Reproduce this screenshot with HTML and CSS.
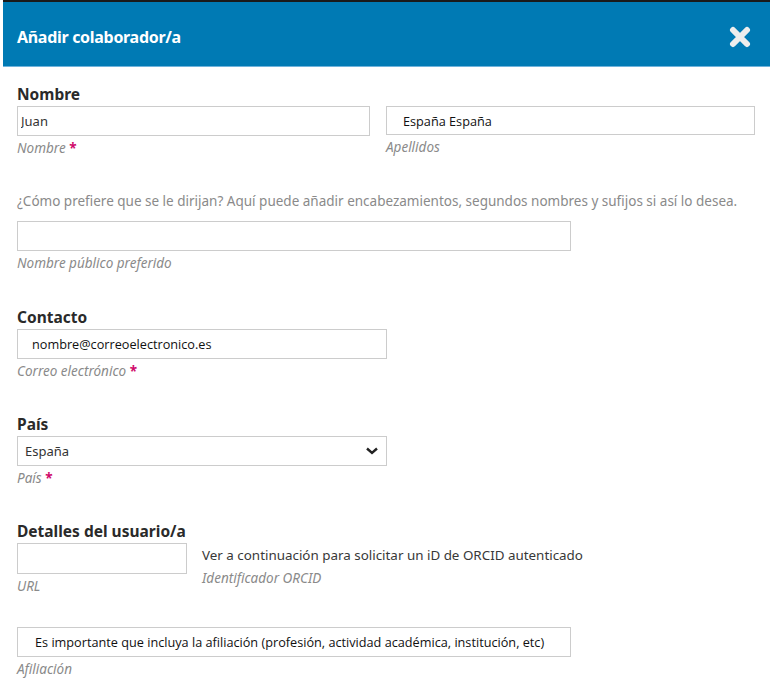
FILE: index.html
```html
<!DOCTYPE html>
<html lang="es">
<head>
<meta charset="utf-8">
<title>Añadir colaborador/a</title>
<link rel="stylesheet" href="styles.css">
</head>
<body>
<div class="modal">
  <div class="modal-header">
    <h1 class="modal-title">Añadir colaborador/a</h1>
    <svg class="close" width="22" height="22" viewBox="0 0 22 22" aria-label="Cerrar">
      <path d="M4 4 L18 18 M18 4 L4 18" stroke="#ededed" stroke-width="6" stroke-linecap="round" fill="none"/>
    </svg>
  </div>
  <div class="modal-body">
    <section class="section first">
      <div class="label">Nombre</div>
      <div class="row">
        <div class="col">
          <input class="input w-given pad-given" type="text" value="Juan" readonly>
          <div class="caption">Nombre <span class="req">*</span></div>
        </div>
        <div class="col">
          <input class="input w-family pad-family alt-font" type="text" value="España España" readonly>
          <div class="caption">Apellidos</div>
        </div>
      </div>
    </section>

    <section class="section">
      <p class="desc">¿Cómo prefiere que se le dirijan? Aquí puede añadir encabezamientos, segundos nombres y sufijos si así lo desea.</p>
      <input class="input w-wide" type="text" value="" readonly>
      <div class="caption">Nombre público preferido</div>
    </section>

    <section class="section">
      <div class="label">Contacto</div>
      <input class="input w-mid pad-email alt-font" type="text" value="nombre@correoelectronico.es" readonly>
      <div class="caption">Correo electrónico <span class="req">*</span></div>
    </section>

    <section class="section tight">
      <div class="label">País</div>
      <div class="select w-mid">
        <span>España</span>
        <svg width="14" height="10" viewBox="0 0 14 10"><path d="M2 2.5 L7 7 L12 2.5" stroke="#222" stroke-width="2.4" fill="none"/></svg>
      </div>
      <div class="caption">País <span class="req">*</span></div>
    </section>

    <section class="section tight">
      <div class="label">Detalles del usuario/a</div>
      <div class="row details">
        <div class="col">
          <input class="input w-url" type="text" value="" readonly>
          <div class="caption">URL</div>
        </div>
        <div class="orcid">
          <div class="orcid-text">Ver a continuación para solicitar un iD de ORCID autenticado</div>
          <div class="caption">Identificador ORCID</div>
        </div>
      </div>
    </section>

    <section class="section affil">
      <input class="input w-wide pad-affil alt-font" type="text" value="Es importante que incluya la afiliación (profesión, actividad académica, institución, etc)" readonly>
      <div class="caption">Afiliación</div>
    </section>
  </div>
</div>
</body>
</html>
```

FILE: styles.css
```css
* { box-sizing: border-box; }

html, body {
  margin: 0;
  padding: 0;
  background: #fff;
}

body {
  font-family: "Noto Sans", "Open Sans", sans-serif;
  color: #222;
}

.modal {
  margin-left: 3px;
  width: 767px;
}

.modal-header {
  height: 67px;
  background: #007ab4;
  border-top: 2px solid #1a1a1a;
  border-bottom: 1px solid #6fb3dc;
  display: flex;
  align-items: center;
  justify-content: space-between;
  padding: 6px 19px 0 14px;
}

.modal-title {
  margin: 0;
  font-size: 16px;
  font-weight: 700;
  color: #fff;
  letter-spacing: -0.3px;
}

.close {
  display: block;
}

.modal-body {
  padding: 0 14px;
}

.section {
  margin-top: 35px;
}

.section.first {
  margin-top: 17px;
}

.section.tight {
  margin-top: 34px;
}

.section.affil {
  margin-top: 32px;
}

.label {
  font-size: 15.5px;
  font-weight: 700;
  line-height: 20px;
  color: #2a2a2a;
  margin-bottom: 2px;
}

.row {
  display: flex;
  gap: 16px;
}

.col {
  display: flex;
  flex-direction: column;
}

.input {
  display: block;
  height: 30px;
  border: 1px solid #cccccc;
  background: #fff;
  font-family: "Noto Sans", "Open Sans", sans-serif;
  font-size: 13px;
  color: #333;
  padding: 0 3px;
  margin: 0;
  outline: none;
}

.alt-font {
  font-family: "Open Sans", "Noto Sans", sans-serif;
  font-size: 12.7px;
  color: #111;
}

.w-given { width: 353px; }
.w-family { width: 369px; height: 29px; }
.w-wide { width: 554px; }
.w-mid { width: 370px; }
.w-url { width: 170px; height: 31px; }

.pad-given { padding-left: 3px; }
.pad-family { padding-left: 16px; }
.pad-email { padding-left: 14px; }
.pad-affil { padding-left: 17px; }

.select {
  height: 30px;
  border: 1px solid #cccccc;
  display: flex;
  align-items: center;
  justify-content: space-between;
  padding: 0 7px 0 7px;
  font-size: 13px;
  color: #333;
}

.caption {
  margin-top: 3px;
  font-size: 13.5px;
  line-height: 18px;
  font-style: italic;
  color: #8a8a8a;
}

.req {
  color: #d00a6c;
  font-style: normal;
  font-weight: 700;
}

.desc {
  margin: 0 0 11px;
  font-size: 13.5px;
  line-height: 18px;
  color: #8a8a8a;
}

.details {
  gap: 15px;
}

.orcid {
  padding-top: 3px;
}

.orcid-text {
  font-size: 13.4px;
  line-height: 18px;
  color: #383838;
}

.orcid .caption {
  margin-top: 5px;
}
```
